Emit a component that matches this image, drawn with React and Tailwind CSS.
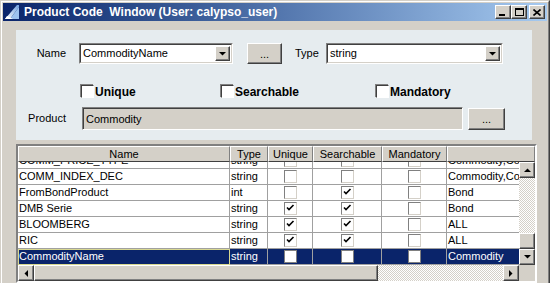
import React from 'react';

const ROWS = [
  { name: 'COMM_PRICE_TYPE', type: 'string', u: false, s: false, m: false, product: 'Commodity,Commodity' },
  { name: 'COMM_INDEX_DEC', type: 'string', u: false, s: false, m: false, product: 'Commodity,Commodity' },
  { name: 'FromBondProduct', type: 'int', u: false, s: true, m: false, product: 'Bond' },
  { name: 'DMB Serie', type: 'string', u: true, s: true, m: false, product: 'Bond' },
  { name: 'BLOOMBERG', type: 'string', u: true, s: true, m: false, product: 'ALL' },
  { name: 'RIC', type: 'string', u: true, s: true, m: false, product: 'ALL' },
  { name: 'CommodityName', type: 'string', u: false, s: false, m: false, product: 'Commodity', selected: true },
];

const COLS = 'grid grid-cols-[212px_38px_45px_69px_65px_88px] w-[517px]';

function Tick() {
  return (
    <svg width="9" height="9" viewBox="0 0 9 9" className="absolute left-[1px] top-[1px]">
      <path d="M1 3.5 L3 5.5 L7.5 1" fill="none" stroke="#000" strokeWidth="1.6" />
    </svg>
  );
}

function CellCheck({ on, selected }) {
  return (
    <span
      className={`relative block w-[13px] h-[13px] bg-white border ${
        selected ? 'border-[#808080]' : 'border-t-[#808080] border-l-[#808080] border-b-[#d4d0c8] border-r-[#d4d0c8]'
      }`}
    >
      {on && <Tick />}
    </span>
  );
}

function FormCheck() {
  return (
    <span className="block w-[13px] h-[13px] bg-white border-t border-l border-t-[#404040] border-l-[#404040] border-b border-r border-b-white border-r-white shadow-[-1px_-1px_0_#808080]" />
  );
}

function Arrow({ dir }) {
  const pts = {
    up: '0,4 7,4 3.5,0.5',
    down: '0,0 7,0 3.5,3.5',
    left: '4,0 4,7 0.5,3.5',
    right: '0,0 0,7 3.5,3.5',
  }[dir];
  const vertical = dir === 'up' || dir === 'down';
  return (
    <svg width={vertical ? 7 : 4} height={vertical ? 4 : 7} viewBox={vertical ? '0 0 7 4' : '0 0 4 7'}>
      <polygon points={pts} fill="#000" />
    </svg>
  );
}

function RaisedBtn({ className = '', children }) {
  return (
    <div
      className={`flex items-center justify-center bg-[#d4d0c8] border-t border-l border-t-white border-l-white border-b border-r border-b-[#404040] border-r-[#404040] shadow-[inset_-1px_-1px_0_#808080] ${className}`}
    >
      {children}
    </div>
  );
}

function Combo({ value, className = '' }) {
  return (
    <div
      className={`flex items-center h-[21px] bg-white border-t border-l border-t-[#808080] border-l-[#808080] border-b border-r border-b-white border-r-white ${className}`}
    >
      <div className="flex items-center flex-1 h-full border-t border-l border-t-[#404040] border-l-[#404040] border-b border-r border-b-[#d4d0c8] border-r-[#d4d0c8]">
        <span className="flex-1 pl-[2px] leading-none">{value}</span>
        <RaisedBtn className="w-[15px] h-[15px] mr-[1px]">
          <Arrow dir="down" />
        </RaisedBtn>
      </div>
    </div>
  );
}

function Track({ className = '' }) {
  return (
    <div
      className={`bg-[repeating-conic-gradient(#d4d0c8_0_25%,#ffffff_0_50%)] bg-[length:2px_2px] ${className}`}
    />
  );
}

function TitleBar() {
  return (
    <div className="flex items-center h-[18px] bg-gradient-to-r from-[#0a246a] to-[#a6caf0] pl-[1px] pr-[2px]">
      <svg width="16" height="16" viewBox="0 0 16 16" className="shrink-0">
        <defs>
          <linearGradient id="ic" x1="0" y1="1" x2="1" y2="0">
            <stop offset="0" stopColor="#ffffff" />
            <stop offset="1" stopColor="#6fa0e0" />
          </linearGradient>
        </defs>
        <polygon points="1,15 13,1 15,1 15,3 6,15" fill="url(#ic)" />
        <polygon points="6,15 15,3 15,15" fill="#9cc2f0" />
        <polygon points="1,15 3,12 9,15" fill="#ffffff" />
      </svg>
      <span className="ml-[4px] text-white font-bold text-[12px] whitespace-pre leading-none">
        Product Code  Window (User: calypso_user)
      </span>
      <div className="flex-1" />
      <RaisedBtn className="w-[16px] h-[14px]">
        <span className="block w-[6px] h-[2px] bg-black mt-[6px] -ml-[2px]" />
      </RaisedBtn>
      <RaisedBtn className="w-[16px] h-[14px]">
        <span className="block w-[9px] h-[8px] border border-black border-t-2" />
      </RaisedBtn>
      <RaisedBtn className="w-[16px] h-[14px] ml-[2px]">
        <svg width="8" height="7" viewBox="0 0 8 7">
          <path d="M0.5 0.5 L7.5 6.5 M7.5 0.5 L0.5 6.5" stroke="#000" strokeWidth="1.6" />
        </svg>
      </RaisedBtn>
    </div>
  );
}

function FormPanel() {
  return (
    <div className="ml-[13px] mr-[15px] mt-[9px] h-[110px] bg-[#e6ecef] pt-[13px]">
      <div className="flex items-center h-[21px]">
        <span className="w-[50px] text-right">Name</span>
        <Combo value="CommodityName" className="ml-[13px] w-[154px]" />
        <RaisedBtn className="ml-[14px] w-[35px] h-[21px]">
          <span className="leading-none mt-[2px]">...</span>
        </RaisedBtn>
        <span className="ml-[13px] w-[31px]">Type</span>
        <Combo value="string" className="w-[177px]" />
      </div>
      <div className="flex items-center h-[13px] mt-[21px] pl-[65px] text-[12px] font-bold">
        <div className="flex items-center w-[140px]">
          <FormCheck />
          <span className="ml-px leading-none">Unique</span>
        </div>
        <div className="flex items-center w-[155px]">
          <FormCheck />
          <span className="ml-px leading-none">Searchable</span>
        </div>
        <div className="flex items-center">
          <FormCheck />
          <span className="ml-px leading-none">Mandatory</span>
        </div>
      </div>
      <div className="flex items-center h-[23px] mt-[9px]">
        <span className="w-[50px] text-right">Product</span>
        <div className="ml-[16px] w-[381px] h-[23px] flex items-center bg-[#d4d0c8] border-t border-l border-t-[#808080] border-l-[#808080] border-b border-r border-b-white border-r-white">
          <div className="flex items-center w-full h-full pl-[2px] border-t border-l border-t-[#404040] border-l-[#404040]">
            Commodity
          </div>
        </div>
        <RaisedBtn className="ml-[5px] w-[37px] h-[22px]">
          <span className="leading-none mt-[2px]">...</span>
        </RaisedBtn>
      </div>
    </div>
  );
}

function Row({ r }) {
  const sel = r.selected;
  const cell = `h-[16px] border-r border-b border-[#a0a0a0] flex items-center overflow-hidden whitespace-nowrap ${
    sel ? 'bg-[#0a246a] text-white' : 'bg-white'
  }`;
  return (
    <div className={COLS}>
      <div className={`${cell} pl-px ${sel ? 'outline outline-1 -outline-offset-1 outline-[#d8d890]' : ''}`}>{r.name}</div>
      <div className={`${cell} pl-px`}>{r.type}</div>
      <div className={`${cell} justify-center`}><CellCheck on={r.u} selected={sel} /></div>
      <div className={`${cell} justify-center`}><CellCheck on={r.s} selected={sel} /></div>
      <div className={`${cell} justify-center`}><CellCheck on={r.m} selected={sel} /></div>
      <div className={`${cell} pl-px`}>{r.product}</div>
    </div>
  );
}

function Table() {
  const heads = ['Name', 'Type', 'Unique', 'Searchable', 'Mandatory', ''];
  return (
    <div className="ml-[13px] mt-[4px] w-[521px] border-2 border-t-[#808080] border-l-[#808080] border-b-white border-r-white">
      <div className={COLS}>
        {heads.map((h, i) => (
          <div
            key={i}
            className="h-[16px] flex items-center justify-center bg-[#d4d0c8] border-t border-l border-t-white border-l-white border-b border-r border-b-[#404040] border-r-[#808080]"
          >
            {h}
          </div>
        ))}
      </div>
      <div className="flex">
        <div className="w-[501px] h-[103px] overflow-hidden bg-white">
          <div className="-mt-[9px]">
            {ROWS.map((r) => (
              <Row key={r.name} r={r} />
            ))}
          </div>
        </div>
        <div className="w-[16px] flex flex-col">
          <RaisedBtn className="w-[16px] h-[16px]"><Arrow dir="up" /></RaisedBtn>
          <Track className="flex-1" />
          <RaisedBtn className="w-[16px] h-[16px]" />
          <RaisedBtn className="w-[16px] h-[16px]"><Arrow dir="down" /></RaisedBtn>
        </div>
      </div>
      <div className="flex h-[16px]">
        <RaisedBtn className="w-[16px] h-[16px]"><Arrow dir="left" /></RaisedBtn>
        <RaisedBtn className="w-[344px] h-[16px]" />
        <Track className="flex-1" />
        <RaisedBtn className="w-[16px] h-[16px]"><Arrow dir="right" /></RaisedBtn>
        <div className="w-[16px] h-[16px] bg-[#d4d0c8]" />
      </div>
    </div>
  );
}

export default function App() {
  return (
    <div className="w-[550px] h-[283px] overflow-hidden bg-[#d4d0c8] font-['Liberation_Sans',Arial,sans-serif] text-[11px] text-black">
      <div className="h-full border-t border-l border-r border-t-[#d4d0c8] border-l-[#d4d0c8] border-r-[#404040]">
        <div className="h-full border-t border-l border-r border-t-white border-l-white border-r-[#808080] p-px">
          <TitleBar />
          <FormPanel />
          <Table />
        </div>
      </div>
    </div>
  );
}
